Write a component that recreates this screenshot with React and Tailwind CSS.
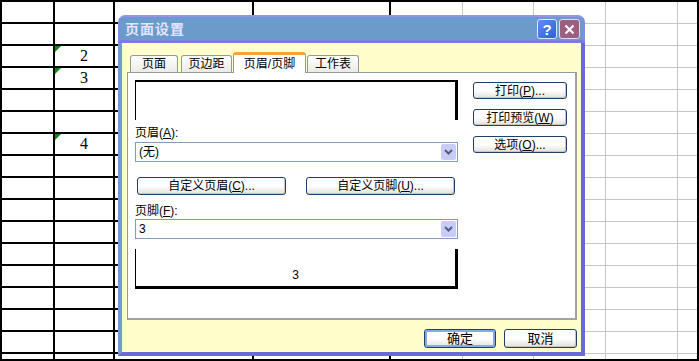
import React from 'react';

const FONT = "font-['Liberation_Sans','Noto_Sans_CJK_SC',sans-serif]";

// spreadsheet columns: first four have black borders, the rest gray gridlines
const COLS = [
  'w-[53px] border-r-2 border-b-2 border-black',
  'w-[60px] border-r-2 border-b-2 border-black',
  'w-[139px] border-r-2 border-b-2 border-black',
  'w-[137px] border-r-2 border-b-2 border-black',
  'w-[72px] border-r border-b border-[#c6c6c6]',
  'w-[71px] border-r border-b border-[#c6c6c6]',
  'w-[72px] border-r border-b border-[#c6c6c6]',
  'w-[72px] border-r border-b border-[#c6c6c6]',
  'flex-1 border-b border-[#c6c6c6]',
];

const CELLS = { 2: '2', 3: '3', 6: '4' };

const Sheet = () => (
  <div className="flex flex-col">
    {Array.from({ length: 17 }).map((_, r) => (
      <div key={r} className="flex h-[22px] shrink-0">
        {COLS.map((c, i) => (
          <div key={i} className={`${c} h-full relative flex items-center shrink-0 font-['Liberation_Serif',serif] text-[16px] text-black`}>
            {i === 1 && CELLS[r] && (
              <>
                <span className="absolute left-0 top-0 w-0 h-0 border-t-[6px] border-t-[#0a8a0a] border-r-[6px] border-r-transparent" />
                <span className="w-full text-center leading-none">{CELLS[r]}</span>
              </>
            )}
            {r === 16 && (i === 2 || i === 3) && (
              <span className="w-full text-right pr-[7px] pt-[6px] self-start leading-none">1,551.00</span>
            )}
          </div>
        ))}
      </div>
    ))}
  </div>
);

const Chevron = () => (
  <svg width="9" height="6" viewBox="0 0 9 6">
    <path d="M1 1 L4.5 4.5 L8 1" fill="none" stroke="#4d5f86" strokeWidth="2" />
  </svg>
);

const Btn = ({ children, className = '', primary }) => (
  <div
    className={`${className} flex items-center justify-center rounded-[3px] border border-[#1c3f6b] bg-linear-to-b from-white via-white to-[#e2e0d6] text-[12px] text-black leading-none ${
      primary ? 'shadow-[inset_0_0_0_2px_#8aa8ec]' : 'shadow-[inset_-1px_-1px_0_#c9c7bd]'
    }`}
  >
    {children}
  </div>
);

const Select = ({ value }) => (
  <div className="w-[323px] h-[20px] border border-[#7f9db9] bg-white flex items-center justify-between pl-[3px] pr-[1px]">
    <span className="text-[12px] leading-none">{value}</span>
    <div className="w-[15px] h-[16px] bg-[#c9ccf7] rounded-[2px] flex items-center justify-center">
      <Chevron />
    </div>
  </div>
);

const Tab = ({ label, active, className = '' }) =>
  active ? (
    <div className={`${className} h-[21px] -mb-px relative z-10 bg-white border-x border-[#919b9c] border-t-[3px] border-t-[#f2a33a] rounded-t-[3px] flex items-center justify-center text-[12px] leading-none`}>
      {label}
    </div>
  ) : (
    <div className={`${className} h-[17px] bg-linear-to-b from-white to-[#ecebe6] border border-b-0 border-[#919b9c] rounded-t-[3px] flex items-center justify-center text-[12px] leading-none`}>
      {label}
    </div>
  );

const Dialog = () => (
  <div className={`absolute left-[116px] top-[13px] w-[467px] h-[341px] flex flex-col ${FONT}`}>
    {/* Title bar */}
    <div className="h-[28px] shrink-0 rounded-t-[7px] bg-[#6b9bcb] border-t-2 border-t-[#9494ec] border-b-[3px] border-b-[#7b7bdf] border-x-2 border-x-[#7f8fe0] flex items-center justify-between pl-[5px] pr-[3px]">
      <span className="text-[14px] font-bold text-[#e4e4ff] tracking-[1px] leading-none">页面设置</span>
      <div className="flex gap-[2px] mt-[1px]">
        <div className="w-[20px] h-[20px] rounded-[3px] border border-[#dfe6ff] bg-linear-to-br from-[#5f8cf5] to-[#2f5fd6] flex items-center justify-center text-white text-[15px] font-bold leading-none">
          ?
        </div>
        <div className="w-[21px] h-[20px] rounded-[3px] border border-[#e6d8e6] bg-[#9b5f82] flex items-center justify-center">
          <svg width="11" height="11" viewBox="0 0 11 11">
            <path d="M1.5 1.5 L9.5 9.5 M9.5 1.5 L1.5 9.5" stroke="white" strokeWidth="2" />
          </svg>
        </div>
      </div>
    </div>

    {/* Body */}
    <div className="flex-1 flex flex-col bg-[#ffffcc] border-l-4 border-l-[#6d9bd3] border-r-4 border-r-[#6a6ad6] border-b-4 border-b-[#6a6ad6] pl-[5px] pr-[4px] pt-[9px]">
      {/* Tabs */}
      <div className="flex items-end h-[20px] pl-[3px]">
        <Tab label="页面" className="w-[48px]" />
        <Tab label="页边距" className="w-[51px] ml-[3px]" />
        <Tab label="页眉/页脚" active className="w-[73px] ml-px" />
        <Tab label="工作表" className="w-[52px] ml-px" />
      </div>

      {/* Panel */}
      <div className="w-[450px] h-[248px] bg-white border border-[#919b9c] border-r-2 border-b-2 border-r-[#a3a3a3] border-b-[#a3a3a3] flex pl-[7px] pt-[7px]">
        <div className="w-[323px] flex flex-col">
          <div className="h-[40px] border-t-2 border-l border-r-[3px] border-black" />
          <div className="mt-[5px] h-[16px] text-[12px] leading-[16px]">
            页眉(<span className="underline">A</span>):
          </div>
          <div className="mt-px">
            <Select value="(无)" />
          </div>
          <div className="mt-[15px] flex pl-[2px] gap-[20px]">
            <Btn className="w-[149px] h-[18px]">自定义页眉(<span className="underline">C</span>)...</Btn>
            <Btn className="w-[149px] h-[18px]">自定义页脚(<span className="underline">U</span>)...</Btn>
          </div>
          <div className="mt-[8px] h-[16px] text-[12px] leading-[16px]">
            页脚(<span className="underline">F</span>):
          </div>
          <Select value="3" />
          <div className="mt-[10px] h-[40px] border-l border-b-[3px] border-r-[3px] border-black flex items-end justify-center pb-[5px] text-[12px] leading-none">
            3
          </div>
        </div>
        <div className="ml-[15px] pt-[2px] flex flex-col gap-[10px]">
          <Btn className="w-[94px] h-[17px]">打印(<span className="underline">P</span>)...</Btn>
          <Btn className="w-[94px] h-[17px]">打印预览(<span className="underline">W</span>)</Btn>
          <Btn className="w-[94px] h-[17px]">选项(<span className="underline">O</span>)...</Btn>
        </div>
      </div>

      {/* Footer buttons */}
      <div className="mt-[9px] flex justify-end gap-[8px]">
        <Btn primary className="w-[72px] h-[19px] text-[13px]">确定</Btn>
        <Btn className="w-[73px] h-[19px] text-[13px]">取消</Btn>
      </div>
    </div>
  </div>
);

export default function App() {
  return (
    <div className="w-[699px] h-[361px] relative overflow-hidden bg-white border-2 border-black">
      <Sheet />
      <Dialog />
    </div>
  );
}
